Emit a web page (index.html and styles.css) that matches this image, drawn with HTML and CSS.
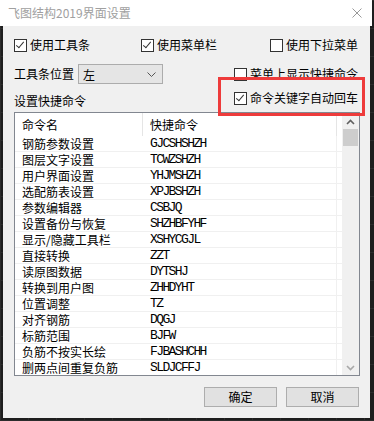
FILE: index.html
```html
<!DOCTYPE html>
<html lang="zh-CN">

<head>
    <meta charset="UTF-8">
    <title>飞图结构2019界面设置</title>
    <link rel="stylesheet" href="styles.css">
</head>

<body>
    <div class="dialog">
        <!-- 标题栏 -->
        <div class="title-bar">
            <span class="title-text">飞图结构2019界面设置</span>
            <svg class="close-icon" width="10" height="10" viewBox="0 0 10 10">
                <path d="M0.5 0.5 L9.5 9.5 M9.5 0.5 L0.5 9.5" stroke="#999" stroke-width="1" fill="none" />
            </svg>
        </div>

        <div class="client">
            <div class="row-top">
                <label class="check-item"><span class="box checked"></span>使用工具条</label>
                <label class="check-item"><span class="box checked"></span>使用菜单栏</label>
                <label class="check-item"><span class="box"></span>使用下拉菜单</label>
            </div>

            <div class="row-pos">
                <div class="pos-left">
                    <span class="label">工具条位置</span>
                    <div class="combo">
                        <span>左</span>
                        <svg class="combo-arrow" width="9" height="5" viewBox="0 0 9 5">
                            <path d="M0.5 0.5 L4.5 4.5 L8.5 0.5" stroke="#555" fill="none" />
                        </svg>
                    </div>
                </div>
                <label class="check-item right-check"><span class="box"></span>菜单上显示快捷命令</label>
            </div>

            <div class="row-set">
                <span class="label set-label">设置快捷命令</span>
                <label class="check-item right-check auto-check"><span class="box checked"></span>命令关键字自动回车</label>
            </div>

            <div class="list-box">
                <div class="list-body">
                    <div class="list-head">
                        <div class="cell col-name">命令名</div>
                        <div class="cell col-key">快捷命令</div>
                    </div>
                    <div class="list-row"><div class="cell col-name">钢筋参数设置</div><div class="cell col-key">GJCSHSHZH</div></div>
                    <div class="list-row"><div class="cell col-name">图层文字设置</div><div class="cell col-key">TCWZSHZH</div></div>
                    <div class="list-row"><div class="cell col-name">用户界面设置</div><div class="cell col-key">YHJMSHZH</div></div>
                    <div class="list-row"><div class="cell col-name">选配筋表设置</div><div class="cell col-key">XPJBSHZH</div></div>
                    <div class="list-row"><div class="cell col-name">参数编辑器</div><div class="cell col-key">CSBJQ</div></div>
                    <div class="list-row"><div class="cell col-name">设置备份与恢复</div><div class="cell col-key">SHZHBFYHF</div></div>
                    <div class="list-row"><div class="cell col-name">显示/隐藏工具栏</div><div class="cell col-key">XSHYCGJL</div></div>
                    <div class="list-row"><div class="cell col-name">直接转换</div><div class="cell col-key">ZZT</div></div>
                    <div class="list-row"><div class="cell col-name">读原图数据</div><div class="cell col-key">DYTSHJ</div></div>
                    <div class="list-row"><div class="cell col-name">转换到用户图</div><div class="cell col-key">ZHHDYHT</div></div>
                    <div class="list-row"><div class="cell col-name">位置调整</div><div class="cell col-key">TZ</div></div>
                    <div class="list-row"><div class="cell col-name">对齐钢筋</div><div class="cell col-key">DQGJ</div></div>
                    <div class="list-row"><div class="cell col-name">标筋范围</div><div class="cell col-key">BJFW</div></div>
                    <div class="list-row"><div class="cell col-name">负筋不按实长绘</div><div class="cell col-key">FJBASHCHH</div></div>
                    <div class="list-row"><div class="cell col-name">删两点间重复负筋</div><div class="cell col-key">SLDJCFFJ</div></div>
                </div>
                <div class="scroll-bar">
                    <svg class="scroll-arrow" width="9" height="6" viewBox="0 0 9 6">
                        <path d="M1 5 L4.5 1.5 L8 5" stroke="#606060" stroke-width="1.6" fill="none" />
                    </svg>
                    <div class="scroll-thumb"></div>
                    <div class="scroll-space"></div>
                    <svg class="scroll-arrow" width="9" height="6" viewBox="0 0 9 6">
                        <path d="M1 1 L4.5 4.5 L8 1" stroke="#a8a8a8" stroke-width="1.6" fill="none" />
                    </svg>
                </div>
            </div>

            <div class="button-row">
                <button class="win-button">确定</button>
                <button class="win-button">取消</button>
            </div>
        </div>

        <!-- 标注框 -->
        <div class="highlight"></div>
    </div>
</body>

</html>
```

FILE: styles.css
```css
body {
    margin: 0;
    background-color: #1e1e1e;
    background-image:
        linear-gradient(90deg, #2c2c2c 1px, transparent 1px),
        linear-gradient(#2c2c2c 1px, transparent 1px);
    background-size: 28px 28px;
    font-family: "Noto Sans CJK SC", "Noto Sans", sans-serif;
    font-size: 12px;
    color: #000;
}

.dialog {
    position: relative;
    width: 372px;
}

.title-bar {
    height: 26px;
    background-color: #fff;
    display: flex;
    align-items: center;
    justify-content: space-between;
    padding: 0 10px 0 8px;
}

.title-text {
    color: #a0a0a0;
    font-size: 12px;
    line-height: 16px;
}

.close-icon {
    display: block;
    margin-top: -1px;
}

.client {
    margin: 0 2px 0 3px;
    background-color: #f0f0f0;
    padding: 11px 10px 11px 11px;
}

.check-item {
    display: flex;
    align-items: center;
    height: 16px;
    line-height: 16px;
    white-space: nowrap;
}

.box {
    width: 11px;
    height: 11px;
    border: 1px solid #333;
    background-color: #fff;
    margin-right: 3px;
    flex: none;
    position: relative;
}

.box.checked::after {
    content: "";
    position: absolute;
    left: 3px;
    top: 0px;
    width: 3px;
    height: 7px;
    border-right: 1px solid #333;
    border-bottom: 1px solid #333;
    transform: rotate(40deg);
}

.row-top {
    display: grid;
    grid-template-columns: 127px 129px auto;
}

.row-pos {
    display: flex;
    justify-content: space-between;
    margin-top: 11px;
    height: 20px;
}

.pos-left {
    display: flex;
    align-items: center;
}

.label {
    line-height: 16px;
}

.combo {
    width: 85px;
    height: 20px;
    margin-left: 4px;
    border: 1px solid #acacac;
    background-color: #e5e5e5;
    display: flex;
    align-items: center;
    justify-content: space-between;
    padding: 0 6px 0 4px;
    box-sizing: border-box;
}

.combo-arrow {
    display: block;
}

.right-check {
    width: 126px;
    margin-top: 2px;
}

.row-set {
    display: flex;
    justify-content: space-between;
    height: 24px;
    margin-top: 4px;
}

.set-label {
    align-self: flex-end;
    margin-bottom: 3px;
}

.auto-check {
    margin-top: 2px;
}

.list-box {
    display: flex;
    height: 264px;
    border: 1px solid #828790;
    box-sizing: border-box;
    background-color: #fff;
    overflow: hidden;
}

.list-body {
    flex: 1;
    overflow: hidden;
}

.list-head {
    display: flex;
    height: 23px;
    align-items: center;
}

.list-head .cell {
    border-right: 1px solid #e5e5e5;
    height: 23px;
    line-height: 23px;
}

.list-row {
    display: flex;
    height: 15px;
    border-bottom: 1px solid #f0f0f0;
}

.cell {
    line-height: 15px;
    box-sizing: border-box;
    white-space: nowrap;
    overflow: hidden;
}

.col-name {
    width: 128px;
    padding-left: 7px;
}

.col-key {
    width: 194px;
    padding-left: 7px;
    border-right: 1px solid #f0f0f0;
}

.list-row .col-key {
    font-family: "Liberation Mono", monospace;
    font-size: 13px;
    letter-spacing: -1.6px;
}

.scroll-bar {
    width: 17px;
    flex: none;
    background-color: #f0f0f0;
    display: flex;
    flex-direction: column;
    align-items: center;
}

.scroll-arrow {
    display: block;
    margin: 6px 0 4px;
}

.scroll-thumb {
    width: 15px;
    height: 17px;
    background-color: #cdcdcd;
}

.scroll-space {
    flex: 1;
}

.button-row {
    display: flex;
    justify-content: flex-end;
    gap: 9px;
    margin-top: 11px;
    padding-right: 1px;
}

.win-button {
    width: 73px;
    height: 20px;
    background-color: #e1e1e1;
    border: 1px solid #adadad;
    font-family: "Noto Sans CJK SC", sans-serif;
    font-size: 12px;
    padding: 0;
    line-height: 16px;
    color: #000;
}

.highlight {
    position: absolute;
    left: 218px;
    top: 77px;
    width: 147px;
    height: 39px;
    border: 3px solid #ee3b3b;
    box-sizing: border-box;
}
```
